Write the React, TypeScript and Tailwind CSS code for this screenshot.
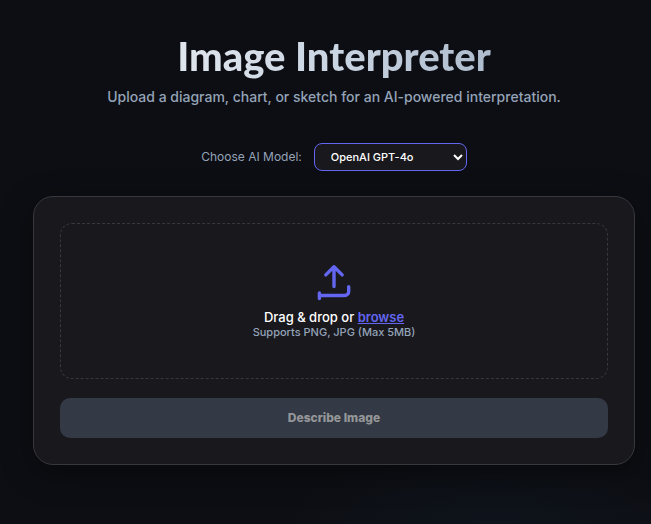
import React, { useState } from 'react';

const models = ['OpenAI GPT-4o', 'Google Gemini', 'Claude Sonnet'];

const UploadIcon: React.FC = () => (
  <svg
    viewBox="0 0 40 40"
    className="h-10 w-10 text-[#6366f1]"
    fill="none"
    stroke="currentColor"
    strokeWidth="3.4"
    strokeLinecap="round"
    strokeLinejoin="round"
    aria-hidden="true"
  >
    <path d="M20 24.5V4.7M11.8 12.9 20 4.7l8.2 8.2" />
    <path d="M5.4 31v5.6M5.4 33.5h25.3a4 4 0 0 0 4-4V24.8" />
  </svg>
);

const App: React.FC = () => {
  const [model, setModel] = useState(models[0]);

  return (
    <div className="min-h-screen bg-[#0d0e13] bg-[radial-gradient(ellipse_220px_70px_at_76%_100%,#0e141c,transparent)] pt-9 pr-4 pb-[59px] pl-[33px] font-['Inter',sans-serif]">
      <header className="text-center">
        <h1 className="bg-linear-to-r from-gray-100 via-slate-300 to-[#94a3b8] bg-clip-text pb-1 font-['Lato',sans-serif] text-[40px] leading-10 font-black text-transparent">
          Image Interpreter
        </h1>
        <p className="mt-[5px] text-sm leading-6 font-medium text-[#94a3b8]">
          Upload a diagram, chart, or sketch for an AI-powered interpretation.
        </p>
      </header>

      {/* Model picker */}
      <div className="mt-[34px] flex items-center justify-center gap-3">
        <label htmlFor="model" className="text-xs text-[#94a3b8]">
          Choose AI Model:
        </label>
        <div className="relative">
          <select
            id="model"
            value={model}
            onChange={(e) => setModel(e.target.value)}
            className="block h-7 w-[153px] appearance-none rounded-lg border border-[#6366f1] bg-[#19181d] px-4 text-[11px] font-medium text-white"
          >
            {models.map((m) => (
              <option key={m}>{m}</option>
            ))}
          </select>
          <svg
            viewBox="0 0 10 8"
            className="pointer-events-none absolute top-2.5 right-1 h-2 w-2.5 text-white"
            fill="none"
            stroke="currentColor"
            strokeWidth="2"
            aria-hidden="true"
          >
            <path d="M1 2l4 4 4-4" />
          </svg>
        </div>
      </div>

      {/* Upload card */}
      <main className="mt-[25px] rounded-[20px] border border-[#38373c] bg-[#19181d] p-[26px] shadow-[0_8px_32px_rgba(0,0,0,0.4)]">
        <label
          htmlFor="file"
          className="flex cursor-pointer flex-col items-center rounded-xl border border-dashed border-[#38373c] pt-[38px] pb-[39px]"
        >
          <UploadIcon />
          <span className="mt-[7px] text-[13px] leading-4 font-medium text-white">
            Drag &amp; drop or <span className="font-semibold text-[#6366f1] underline">browse</span>
          </span>
          <span className="text-[11px] leading-[14px] font-medium text-[#94a3b8]">Supports PNG, JPG (Max 5MB)</span>
          <input id="file" type="file" accept="image/png,image/jpeg" className="sr-only" />
        </label>
        <button
          type="button"
          disabled
          className="mt-[19px] block h-10 w-full rounded-[10px] bg-[#333945] text-xs font-extrabold text-[#959698]"
        >
          Describe Image
        </button>
      </main>
    </div>
  );
};

export default App;
